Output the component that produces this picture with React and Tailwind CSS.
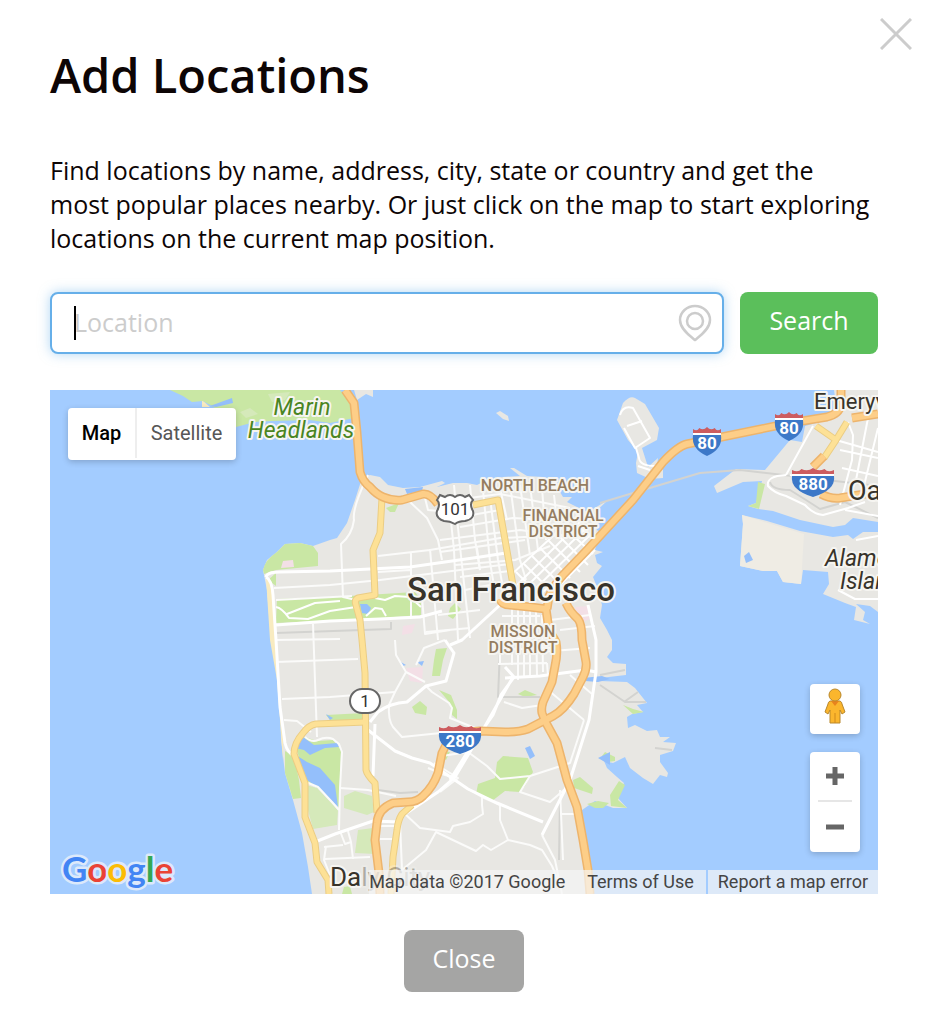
import React, { useState } from 'react';

const freeways = [
  'M295 0L304 13L307 43L310 82Q313 92 320 97Q326 104 333 107Q342 111 352 110L373 104Q380 103 388 114',
  'M450 209Q452 215 460 215L480 217L496 219L499 240L506 252Q508 263 505 276L502 292L493 312Q491 318 492 323L495 331L507 353L517 390L527 417L533 450L538 480L540 504',
  'M497 219L499 206Q504 195 513 185L537 160L560 135L583 110L613 72Q628 56 637 54L657 50L740 33L777 27Q789 24 791 15L791 0',
  'M516 213Q520 222 528 229Q532 234 532 250L536 272Q537 279 533 287L524 304Q514 320 503 326L478 339Q470 342 455 342L430 341L410 343Q397 350 392 363L388 383Q383 397 373 406Q367 412 358 412L343 413Q328 419 327 433L325 450L329 483L330 504',
  'M763 77L774 66M771 104Q780 109 790 108L828 102M802 28L828 24',
];

const highways = [
  'M423 115L448 110L463 195',
  'M332 108L330 143L323 160L325 205L308 208Q304 210 306 215L310 230L312 250L315 283L316 380Q317 385 325 393L327 423',
  'M316 332L266 334Q259 335 253 343Q244 353 244 364Q252 385 255 393L255 427L265 453L267 472L278 490L279 504',
  'M362 415L352 424Q348 430 347 440L343 467L341 504',
  'M766 36L786 50L797 32M786 50L774 68',
];

const mainStreets = [
  'M216 187Q217 182 230 182L280 181L360 177L430 167L456 163',
  'M216 187Q222 190 223 205L226 250L230 317L235 353Q237 362 244 366',
  'M226 235L280 231L330 229L370 227L392 221',
  'M400 255L412 250L450 215',
  'M320 332L328 322Q340 313 357 312L376 296L396 291L404 263L395 250',
  'M325 334L323 386M318 340L345 361L362 368L380 373L418 399L447 413L493 432',
  'M400 390L420 358L443 325L451 305L464 287L455 277M355 424L388 402L405 387L430 345L447 315L463 287',
  'M455 288L490 286L536 280L546 282L546 250L538 215M546 282L539 330L520 390L492 445M265 452L285 444L323 431L350 432',
];

const streets = [
  'M224 198L280 195L330 190L410 180L460 174',
  'M226 210L302 206M226 272L308 269M232 309L280 307L345 302',
  'M225 250L290 249M263 234L267 347M234 330L247 331L261 342',
  'M255 347Q262 353 268 350Q276 346 283 349L289 354L292 362L290 398L289 440',
  'M318 85Q302 118 304 130Q302 145 291 154L293 207L306 210',
  'M328 166L380 160L450 148L540 144M380 159L388 250M361 162L361 227M328 182L360 180',
  'M338 110L360 112L377 128L388 150L392 170M375 108L378 120L400 122L404 160L408 250',
  'M404 95L408 138L412 175L420 248M420 95L425 150L430 180M433 100L440 172L446 208M440 108L448 170L455 210',
  'M404 110L450 104L520 118M410 137L463 128L500 130M390 150L470 140L530 148M390 162L475 150M405 128L450 120',
  'M405 175L465 170L500 156M410 187L460 181M415 200L450 193M388 225L430 220M376 242L420 238',
  'M460 94L470 170L476 190M470 95L480 165M450 98L457 130M427 158L430 180M480 95L488 160M492 98L496 150M504 105L508 140',
  'M372 207L375 244L400 240M345 250L346 265L356 282L375 292M395 250L374 258L366 275',
  'M462 215L462 275M468 218L468 290M474 218L474 286M480 220L480 286M486 222L487 286M492 225L493 282',
  'M450 250L496 246M446 260L500 258M448 274L497 273M490 262L540 258M497 273L498 286M450 250L450 275',
  'M452 226L490 226M456 238L492 236M500 230L540 225M510 240L545 236M520 285L535 298L542 304',
  'M345 302L356 282M345 302L339 315Q338 330 343 337L352 347L410 341M376 296L382 302L399 313L402 318L400 328L430 340',
  'M454 312L472 318L492 315M498 300L534 330M534 330L520 373M392 366L418 362L437 376L450 389L480 386L520 373L510 376',
  'M384 373L408 388L390 402M345 361L362 368M378 378L395 385L408 388M480 386L470 402L500 412L515 399',
  'M418 399L432 407L432 415L433 424L420 432L403 436L400 442L370 438L355 424M432 407L450 415L450 430L458 450',
  'M458 450L441 460L433 455L426 461L386 442L376 460L352 480L350 432M458 450L480 455L492 460L502 476L510 495',
  'M492 445L505 470L512 504M510 400L513 470M512 424L524 424M290 398L318 400L346 406',
  'M256 392L268 397L282 412L289 420M290 441L295 454L301 452L298 441M301 452L303 469',
  'M274 457L293 455M276 456L274 470L280 485M275 469L320 467M330 449L342 449M330 436L346 436',
];

// downtown grid south of Market street
const downtownGrid = [
  'M467 195L530 132M473 200L536 138M480 204L541 144M487 208L543 152M494 211L545 160M460 186L520 130',
  'M466 182L496 212M474 174L504 204M482 166L512 196M490 158L520 188M498 150L530 182M506 143L538 175M514 137L543 164M522 130L546 152',
];

const eastBayStreets = [
  'M570 25Q573 15 583 18L600 48L585 58L574 38M577 36L592 31M586 58L589 68Q590 76 605 76M588 76L600 80',
  'M763 36L736 85M798 32L803 45L802 70L790 115M818 28L806 90L800 104M828 38L812 104M790 60L828 68M792 78L828 86',
  'M736 85Q716 86 718 96Q724 103 736 106L755 115Q763 124 773 125L798 118L815 112M740 85L757 90M795 120L828 126',
  'M786 50L828 62M788 200L805 209L828 209M806 150L828 146',
];

const parks = [
  'M120 0L133 6L142 12L153 11L162 16L168 20L180 35L186 37L205 32L222 31L260 30L280 33L304 28L300 12L290 0Z',
  'M214 184L213 180Q215 170 227 162L235 154L250 153L263 156L268 163L268 176L226 180Z',
  'M218 190L226 183L226 196Z',
  'M227 209L300 206L365 202L371 210L371 225L330 228L226 233Z',
  'M336 118L349 113L345 122L340 122Z',
  'M400 218L405 213L411 219L403 229L398 226Z',
  'M386 259L397 258L393 270L390 286L382 286L384 270Z',
  'M389 300L401 305L407 320L407 329L402 325L400 313Z',
  'M362 317L370 311L377 317L376 325L365 323Z',
  'M468 304L475 300L487 305L475 307Z',
  'M447 372L453 366L478 368L483 382L475 396L470 402L455 401L442 411L426 404L428 394L445 388Z',
  'M394 361L400 362L396 370L393 368Z',
  'M523 390L530 387L543 398L542 404L524 398Z',
  'M537 414L548 411L559 413L553 418L545 418Z',
  'M235 361L244 366L249 390L251 408L243 409L235 383Z',
  'M246 358L255 347L267 351L283 350L291 360L289 417L270 400L257 391Z',
  'M276 325L314 323L315 331L280 330Z',
  'M294 497L300 496L302 504L292 504Z',
  'M573 315L583 319L594 322L583 324Z',
  'M552 366L555 362L565 367L565 371L558 372Z',
  'M569 391L575 395L568 410L577 418L561 416L560 405Z',
];

const paleParks = [
  'M256 395L267 398L288 420L287 435L263 439L258 420Z',
  'M294 406L305 401L322 406L324 422L317 425L294 418Z',
  'M308 440L323 438L325 464L305 463Z',
  'M218 4L240 2L235 10L222 12Z',
  'M190 22L200 18L208 24L196 28Z',
];

const ponds = [
  'M160 16L182 8L183 13L166 17Z',
  'M245 358L253 347L264 355L287 353L289 357L275 358L260 365L254 360Z',
  'M246 365L257 372L270 378L285 395L288 417L281 410L270 399L257 390Z',
  'M310 214L317 214L321 218L318 224L312 223Z',
  'M355 99L373 97L372 101L357 104Z',
  'M475 358L480 356L485 366L480 369Z',
  'M349 271L356 275L353 276ZM367 272L374 271L372 276Z',
  'M533 288L552 286L560 289L548 292L535 291Z',
  'M548 368L560 362L560 375Z',
  'M276 324L283 328L280 330Z',
  'M694 166L699 162L703 170L696 173Z',
];

const sanFrancisco =
  'M262 504L258 477L252 443L243 410L235 383L231 350L230 317L227 283L221 250L217 200L213 180L217 170L227 162L235 154L250 153L263 156L280 150L287 148L297 133L305 110L312 88L320 85L330 87L338 95L353 98L370 97L392 91L395 93L387 97L403 93L417 93L427 95L437 90L453 87L470 86L460 78L464 78L477 86L493 87L507 97L513 107L522 107L517 112L527 117L538 122L558 110L542 125L547 140L550 142L545 160L553 162L545 165L547 173L552 176L543 187L547 197L552 215L550 228L557 240L562 250L562 260L557 267L563 273L576 274L576 285L550 288L550 291L577 292L585 298L597 313L587 315L593 322L582 324L577 327L578 338L585 335L597 341L607 340L610 347L620 347L613 352L626 353L623 361L610 365L610 372L618 383L617 387L610 385L603 394L593 388L580 378L575 367L563 373L554 371L557 378L567 387L574 393L567 407L577 418L563 418L545 411L532 420L532 443L537 477L538 504Z';

const oakland =
  'M784 0L787 20L777 30L755 36L752 52L740 50L715 80L686 79L664 96L667 103L693 92L712 91L706 113L698 116L708 119L723 121L750 130L783 137L795 135L803 128L828 132V0Z';

const alameda =
  'M692 125L717 131L750 141L783 147L798 145L803 149L813 142L828 142V222L820 216L806 214L815 222L813 230L820 234L804 230L806 217L795 213L773 204L779 194L778 182L753 180L751 194L733 192L727 181L713 181L690 176L693 134Z';

const Interstate = ({ x, y, number, wide }) => {
  const w = wide ? 21 : 14;
  return (
    <g transform={`translate(${x} ${y})`}>
      <path d={`M${-w} -13Q${-w * 0.7} -10 ${-w * 0.55} -14Q${-w * 0.25} -11 0 -15Q${w * 0.25} -11 ${w * 0.55} -14Q${w * 0.7} -10 ${w} -13L${w} -8H${-w}Z`} fill="#cd5c5f" />
      <path d={`M${-w} -7H${w}Q${w + 2} 7 0 14Q${-w - 2} 7 ${-w} -7Z`} fill="#3c78c8" />
      <path d={`M${-w} -8H${w}`} stroke="#fff" strokeWidth="2" />
      <text y="7" textAnchor="middle" fontSize="17" fontWeight="700" fill="#fff">{number}</text>
    </g>
  );
};

const Strokes = ({ paths, color, width }) => (
  <g fill="none" stroke={color} strokeWidth={width} strokeLinejoin="round">
    {paths.map((d) => <path key={d} d={d} />)}
  </g>
);

const Fills = ({ paths, color }) => (
  <g fill={color}>
    {paths.map((d) => <path key={d} d={d} />)}
  </g>
);

const CityMap = () => (
  <svg
    viewBox="0 0 828 504"
    preserveAspectRatio="xMidYMid slice"
    className="block h-full w-full font-[Roboto,sans-serif]"
    role="img"
    aria-label="Map of San Francisco"
  >
    <rect width="828" height="504" fill="#a3ccff" />
    <g fill="#e8e7e3">
      <path d={sanFrancisco} />
      <path d={oakland} />
      <path d={alameda} />
      <path d="M304 0L307 10L316 4L323 7L323 0Z" />
      <path d="M446 23L450 21L458 26L459 31L453 29Z" />
      <path d="M567 30L573 13Q580 5 585 8L595 14L609 38L607 50L592 58L598 77L608 68L607 76L613 78L613 88L600 89L587 83L586 73L588 62L578 50Z" />
    </g>
    <path d="M692 125L754 144L751 194L733 192L727 181L713 181L690 176L693 134Z" fill="#efece4" />
    <path d="M216 188L221 190L225 250L233 350L233 370L227 290L220 250Z" fill="#f8ebc0" />
    <path d="M152 10L160 17H152Z" fill="#f8ebc0" />
    <Fills paths={parks} color="#c9e7a4" />
    <Fills paths={paleParks} color="#d5e9ba" />
    <path d="M715 94L708 92L706 113L698 116L709 119Z" fill="#c9e7a4" />
    <path d="M233 171L243 170L244 177L231 178ZM356 278L373 277L372 293L360 291ZM353 236L365 234L362 243L352 245ZM525 217L538 216L540 229L530 233Z" fill="#f3dfe6" />
    <Fills paths={ponds} color="#94bffb" />
    <Strokes
      paths={[
        'M550 113L583 103L650 83L690 80L828 96',
        'M226 243L341 239L341 232M450 260L448 307L490 307',
        'M720 92Q722 100 740 100L756 110L770 119L795 112L828 128',
        'M550 295L575 312L596 312M574 312L588 302M550 285L575 280M605 358L622 360',
        'M328 400L350 403L368 402M510 406L509 470',
      ]}
      color="#d3d3d0"
      width="2"
    />
    <Strokes paths={streets} color="#fbfbfa" width="2" />
    <Strokes paths={downtownGrid} color="#fff" width="2" />
    <Strokes paths={eastBayStreets} color="#fff" width="2" />
    <Strokes
      paths={['M226 217Q232 218 239 228L258 229L280 221L306 217M237 224L265 213L290 211M316 226L325 218L332 219L336 226M325 208L335 210L345 206L360 207L371 217']}
      color="#fff"
      width="2"
    />
    <Strokes paths={mainStreets} color="#fff" width="3" />
    <Strokes paths={highways} color="#ebcd84" width="7" />
    <Strokes paths={highways} color="#fde196" width="5" />
    <Strokes paths={freeways} color="#edb46c" width="9" />
    <Strokes paths={freeways} color="#fdce88" width="6" />

    <Interstate x={657} y={52} number="80" />
    <Interstate x={739} y={37} number="80" />
    <Interstate x={763} y={93} number="880" wide />
    <Interstate x={410} y={350} number="280" wide />
    <path
      d="M390 105L395 107Q400 103 405 107Q410 103 415 107L419 105L423 110Q419 114 423 121Q425 129 415 131Q409 131 405 134Q400 131 394 131Q385 128 387 121Q391 114 387 110Z"
      fill="#fff"
      stroke="#666"
      strokeWidth="2"
    />
    <text x="405" y="125" textAnchor="middle" fontSize="17" fill="#333">101</text>
    <rect x="300" y="299" width="30" height="24" rx="12" fill="#fff" stroke="#666" strokeWidth="2" />
    <text x="315" y="317" textAnchor="middle" fontSize="17" fill="#333">1</text>

    <g stroke="#f6f5f1" strokeWidth="4" strokeLinejoin="round" paintOrder="stroke" textAnchor="middle">
      <g fontSize="23" fontStyle="italic" fill="#4a8522">
        <text x="252" y="25">Marin</text>
        <text x="251" y="48">Headlands</text>
      </g>
      <g fontSize="16" fontWeight="500" fill="#957d60">
        <text x="485" y="101">NORTH BEACH</text>
        <text x="513" y="131">FINANCIAL</text>
        <text x="513" y="147">DISTRICT</text>
        <text x="473" y="247">MISSION</text>
        <text x="473" y="263">DISTRICT</text>
      </g>
      <text x="461" y="211" fontSize="33" fontWeight="500" fill="#38332a">San Francisco</text>
      <g fill="#38332a" textAnchor="start">
        <text x="764" y="19" fontSize="22">Emeryville</text>
        <text x="798" y="110" fontSize="27">Oakland</text>
        <g fontSize="23" fontStyle="italic">
          <text x="775" y="176">Alameda</text>
          <text x="790" y="199">Island</text>
        </g>
        <text x="280" y="496" fontSize="26">
          Da<tspan fillOpacity="0.35" strokeOpacity="0.3">ly City</tspan>
        </text>
      </g>
    </g>
  </svg>
);

const GoogleLogo = () => (
  <svg width="120" height="44" viewBox="0 0 120 44" className="block" aria-label="Google">
    <text
      x="2"
      y="32"
      fontFamily="Lato, sans-serif"
      fontSize="35"
      fontWeight="700"
      stroke="#dce9fb"
      strokeWidth="5"
      strokeLinejoin="round"
      paintOrder="stroke"
    >
      <tspan fill="#4285f4">G</tspan>
      <tspan fill="#ea4335">o</tspan>
      <tspan fill="#fbbc05">o</tspan>
      <tspan fill="#4285f4">g</tspan>
      <tspan fill="#34a853">l</tspan>
      <tspan fill="#ea4335">e</tspan>
    </text>
  </svg>
);

const Pegman = () => (
  <svg width="22" height="36" viewBox="0 0 22 36" aria-hidden="true">
    <path d="M6 13H16Q18 14 18 16L21 24L18 26L16 22V35H6V22L4 26L1 24L4 16Q4 14 6 13Z" fill="#fbb62d" stroke="#b9882c" strokeLinejoin="round" />
    <path d="M7 13L11 18L15 13Z" fill="#e8831d" />
    <path d="M11 25V35" stroke="#d08a1d" />
    <circle cx="11" cy="7" r="6" fill="#fbb62d" stroke="#b9882c" />
  </svg>
);

const App = () => {
  const [location, setLocation] = useState('');
  const [mapType, setMapType] = useState('map');

  return (
    <div className="relative min-h-screen bg-white pl-[50px] pr-[62px] pt-11 pb-[38px] font-['Open_Sans',sans-serif] text-[#0d0505]">
      <button type="button" aria-label="Close dialog" className="absolute right-7 top-[18px]">
        <svg width="32" height="32" viewBox="0 0 32 32" className="block">
          <path d="M1 1L31 31M31 1L1 31" stroke="#ccc" strokeWidth="3" />
        </svg>
      </button>

      <h1 className="text-[47px] font-semibold leading-[62px]">Add Locations</h1>
      <p className="mt-[47px] text-[25px] leading-[34px]">
        Find locations by name, address, city, state or country and get the most popular places
        nearby. Or just click on the map to start exploring locations on the current map position.
      </p>

      {/* Search */}
      <form className="mt-[37px] flex gap-4" onSubmit={(e) => e.preventDefault()}>
        <div className="relative flex-1">
          <input
            type="text"
            aria-label="Location"
            placeholder="Location"
            value={location}
            onChange={(e) => setLocation(e.target.value)}
            className="block h-[62px] w-full rounded-lg border-2 border-[#66afe9] bg-white pb-[2px] pl-[22px] pr-14 text-[25px] shadow-[0_0_12px_rgba(102,175,233,0.5)] outline-none placeholder:text-[#ccc]"
          />
          {location === '' && <span aria-hidden="true" className="absolute left-6 top-[14px] h-[34px] w-[2px] bg-black" />}
          <svg width="34" height="38" viewBox="0 0 34 38" className="absolute right-3 top-3" fill="none" stroke="#ccc" strokeWidth="2.5" aria-hidden="true">
            <path d="M17 36C12 32 2 25 2 16C2 8 9 2 17 2S32 8 32 16C32 25 22 32 17 36Z" />
            <circle cx="17" cy="17" r="8" />
          </svg>
        </div>
        <button type="submit" className="h-[62px] w-[138px] rounded-lg bg-[#5bbf5b] pb-1 text-[25px] text-white">
          Search
        </button>
      </form>

      {/* Map */}
      <div className="relative mt-9 h-[504px] overflow-hidden bg-[#a3ccff] font-[Roboto,sans-serif]">
        <CityMap />

        <div className="absolute left-[18px] top-[18px] flex h-[52px] rounded-sm bg-white pb-[2px] text-[20px] shadow-[0_2px_6px_rgba(0,0,0,0.2)]">
          <button
            type="button"
            onClick={() => setMapType('map')}
            className={`w-[67px] ${mapType === 'map' ? 'font-medium text-black' : 'text-[#565656]'}`}
          >
            Map
          </button>
          <button
            type="button"
            onClick={() => setMapType('satellite')}
            className={`w-[101px] border-l-2 border-[#eee] ${mapType === 'satellite' ? 'font-medium text-black' : 'text-[#565656]'}`}
          >
            Satellite
          </button>
        </div>

        <div className="absolute bottom-[42px] right-[18px] flex w-[50px] flex-col gap-[18px]">
          <button type="button" aria-label="Street View" className="flex h-[50px] justify-center rounded-sm bg-white pt-1 shadow-[0_2px_6px_rgba(0,0,0,0.2)]">
            <Pegman />
          </button>
          <div className="flex flex-col items-center rounded-sm bg-white shadow-[0_2px_6px_rgba(0,0,0,0.2)]">
            <button type="button" aria-label="Zoom in" className="flex h-[48px] w-full items-center justify-center">
              <svg width="20" height="20" viewBox="0 0 20 20">
                <path d="M10 1V19M1 10H19" stroke="#666" strokeWidth="5" />
              </svg>
            </button>
            <div className="h-[2px] w-[34px] bg-[#e6e6e6]" />
            <button type="button" aria-label="Zoom out" className="flex h-[50px] w-full items-center justify-center">
              <svg width="20" height="20" viewBox="0 0 20 20">
                <path d="M1 10H19" stroke="#666" strokeWidth="5" />
              </svg>
            </button>
          </div>
        </div>

        <a href="#google" className="absolute bottom-0 left-[10px]">
          <GoogleLogo />
        </a>

        <div className="absolute bottom-0 right-0 flex gap-[2px] text-[18px] leading-6 text-[#444]">
          <div className="flex gap-[22px] bg-[#f5f5f5]/70 pr-3">
            <span>Map data ©2017 Google</span>
            <a href="#terms">Terms of Use</a>
          </div>
          <a href="#report" className="bg-[#f5f5f5]/70 pl-[10px] pr-[10px]">Report a map error</a>
        </div>
      </div>

      <div className="mt-9 flex justify-center">
        <button type="button" className="h-[62px] w-[120px] rounded-lg bg-[#a5a5a4] pb-1 text-[25px] text-white">
          Close
        </button>
      </div>
    </div>
  );
};

export default App;
